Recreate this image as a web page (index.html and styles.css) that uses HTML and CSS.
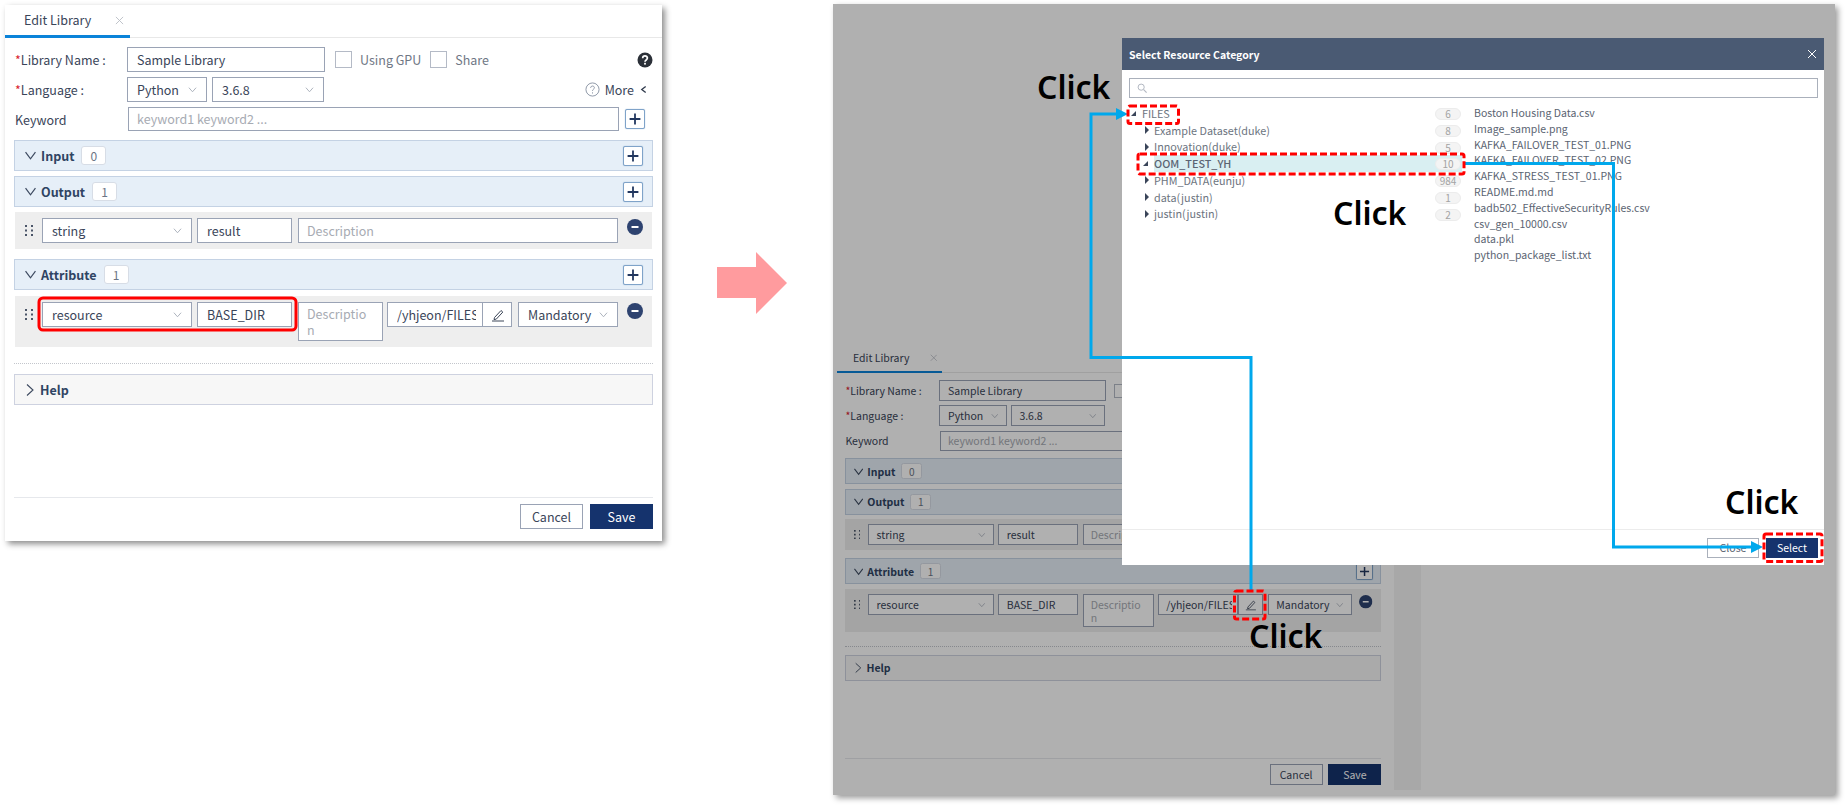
FILE: index.html
```html
<!DOCTYPE html>
<html lang="en">
<head>
<meta charset="utf-8">
<title>Edit Library</title>
<link rel="stylesheet" href="styles.css">
</head>
<body>
<svg class="sprite" width="0" height="0" aria-hidden="true">
  <symbol id="chev" viewBox="0 0 10 10"><path d="M1 3l4 4.5L9 3" fill="none" stroke="currentColor" stroke-width="1"/></symbol>
  <symbol id="bar-down" viewBox="0 0 10 10"><path d="M.5 2l4.5 6 4.5-6" fill="none" stroke="currentColor" stroke-width="1.1"/></symbol>
  <symbol id="bar-right" viewBox="0 0 10 12"><path d="M2 .5L8 6l-6 5.500" fill="none" stroke="currentColor" stroke-width="1.1"/></symbol>
  <symbol id="back" viewBox="0 0 8 10"><path d="M6.500 1.500L2 5l4.500 3.500" fill="none" stroke="#2f3a4c" stroke-width="1.500"/></symbol>
  <symbol id="plus" viewBox="0 0 20 20"><path d="M10 4v12M4 10h12" stroke="#22375f" stroke-width="2"/></symbol>
  <symbol id="minus" viewBox="0 0 16 16"><circle cx="8" cy="8" r="8" fill="#2e4370"/><path d="M4.500 8h7" stroke="#fff" stroke-width="2"/></symbol>
  <symbol id="dots" viewBox="0 0 8 11"><g fill="#4a5568"><rect x="0" y="0" width="2" height="2"/><rect x="6" y="0" width="2" height="2"/><rect x="0" y="4.500" width="2" height="2"/><rect x="6" y="4.500" width="2" height="2"/><rect x="0" y="9" width="2" height="2"/><rect x="6" y="9" width="2" height="2"/></g></symbol>
  <symbol id="pencil" viewBox="0 0 14 14"><path d="M3.500 9.500L10 2.500l1.800 1.600-6.500 7-2.300.5zM1 13h12" fill="none" stroke="#3c4658" stroke-width="1"/></symbol>
  <symbol id="close" viewBox="0 0 10 10"><path d="M1 1l8 8M9 1l-8 8" fill="none" stroke="currentColor" stroke-width="1"/></symbol>
  <symbol id="help-solid" viewBox="0 0 16 16"><circle cx="8" cy="8" r="7.500" fill="#2b3038"/><path d="M5.700 6.200c0-3 4.700-3 4.700-.1 0 1.900-2.400 1.800-2.400 3.700" fill="none" stroke="#fff" stroke-width="1.700"/><rect x="7.100" y="10.800" width="1.800" height="1.800" fill="#fff"/></symbol>
  <symbol id="help-line" viewBox="0 0 16 16"><circle cx="8" cy="8" r="7" fill="none" stroke="#8a93a3"/><path d="M6 6.200c0-2.500 4-2.500 4-.1 0 1.700-2 1.600-2 3.300M8 11v1.300" fill="none" stroke="#8a93a3"/></symbol>
  <symbol id="search" viewBox="0 0 12 12"><circle cx="5" cy="5" r="3.700" fill="none" stroke="#b3b8c2" stroke-width="1.200"/><path d="M8 8l3.500 3.500" stroke="#b3b8c2" stroke-width="1.400"/></symbol>
</svg>

<main class="page">
  <section class="panel">
    <div class="tabs"><div class="tab"><span>Edit Library</span><svg class="tab-x"><use href="#close"/></svg></div></div>
    <div class="form">
      <div class="row row-first">
        <label class="label"><i>*</i>Library Name :</label>
        <div class="field w-name">Sample Library</div>
        <span class="check check-gpu"></span><span class="check-label">Using GPU</span>
        <span class="check check-share"></span><span class="check-label">Share</span>
        <svg class="help"><use href="#help-solid"/></svg>
      </div>
      <div class="row">
        <label class="label"><i>*</i>Language :</label>
        <div class="field select w-python">Python<svg class="chev"><use href="#chev"/></svg></div>
        <div class="field select w-version">3.6.8<svg class="chev"><use href="#chev"/></svg></div>
        <div class="more"><svg class="more-icon"><use href="#help-line"/></svg><span>More</span><svg class="more-back"><use href="#back"/></svg></div>
      </div>
      <div class="row row-keyword">
        <label class="label">Keyword</label>
        <div class="field ph w-keyword">keyword1 keyword2 ...</div>
        <button class="plus plus-keyword"><svg><use href="#plus"/></svg></button>
      </div>
      <div class="bar bar-first"><svg class="bar-chev"><use href="#bar-down"/></svg><strong>Input</strong><span class="count">0</span><button class="plus"><svg><use href="#plus"/></svg></button></div>
      <div class="bar"><svg class="bar-chev"><use href="#bar-down"/></svg><strong>Output</strong><span class="count">1</span><button class="plus"><svg><use href="#plus"/></svg></button></div>
      <div class="item item-output">
        <svg class="dots"><use href="#dots"/></svg>
        <div class="field select w-type">string<svg class="chev"><use href="#chev"/></svg></div>
        <div class="field w-key">result</div>
        <div class="field ph w-desc-full">Description</div>
        <svg class="minus"><use href="#minus"/></svg>
      </div>
      <div class="bar bar-attr"><svg class="bar-chev"><use href="#bar-down"/></svg><strong>Attribute</strong><span class="count">1</span><button class="plus"><svg><use href="#plus"/></svg></button></div>
      <div class="item item-attr">
        <svg class="dots"><use href="#dots"/></svg>
        <div class="field select w-type">resource<svg class="chev"><use href="#chev"/></svg></div>
        <div class="field w-key">BASE_DIR</div>
        <div class="field ph w-desc-wrap">Description</div>
        <div class="path-group"><div class="field w-path"><span>/yhjeon/FILES</span></div><button class="pen"><svg><use href="#pencil"/></svg></button></div>
        <div class="field select w-mand">Mandatory<svg class="chev"><use href="#chev"/></svg></div>
        <svg class="minus"><use href="#minus"/></svg>
      </div>
      <div class="dotted"></div>
      <div class="bar bar-help"><svg class="bar-chev-r"><use href="#bar-right"/></svg><strong>Help</strong></div>
    </div>
    <div class="foot"><button class="btn">Cancel</button><button class="btn btn-primary">Save</button></div>
  </section>

  <svg class="big-arrow" viewBox="0 0 70 62"><path d="M0 15h39V0l31 31-31 31V46H0z" fill="#ff9b9e"/></svg>

  <section class="shot">
    <section class="panel panel-small">
      <div class="tabs"><div class="tab"><span>Edit Library</span><svg class="tab-x"><use href="#close"/></svg></div></div>
      <div class="form">
        <div class="row row-first">
          <label class="label"><i>*</i>Library Name :</label>
          <div class="field w-name">Sample Library</div>
          <span class="check check-gpu"></span><span class="check-label">Using GPU</span>
          <span class="check check-share"></span><span class="check-label">Share</span>
          <svg class="help"><use href="#help-solid"/></svg>
        </div>
        <div class="row">
          <label class="label"><i>*</i>Language :</label>
          <div class="field select w-python">Python<svg class="chev"><use href="#chev"/></svg></div>
          <div class="field select w-version">3.6.8<svg class="chev"><use href="#chev"/></svg></div>
          <div class="more"><svg class="more-icon"><use href="#help-line"/></svg><span>More</span><svg class="more-back"><use href="#back"/></svg></div>
        </div>
        <div class="row row-keyword">
          <label class="label">Keyword</label>
          <div class="field ph w-keyword">keyword1 keyword2 ...</div>
          <button class="plus plus-keyword"><svg><use href="#plus"/></svg></button>
        </div>
        <div class="bar bar-first"><svg class="bar-chev"><use href="#bar-down"/></svg><strong>Input</strong><span class="count">0</span><button class="plus"><svg><use href="#plus"/></svg></button></div>
        <div class="bar"><svg class="bar-chev"><use href="#bar-down"/></svg><strong>Output</strong><span class="count">1</span><button class="plus"><svg><use href="#plus"/></svg></button></div>
        <div class="item item-output">
          <svg class="dots"><use href="#dots"/></svg>
          <div class="field select w-type">string<svg class="chev"><use href="#chev"/></svg></div>
          <div class="field w-key">result</div>
          <div class="field ph w-desc-full">Description</div>
          <svg class="minus"><use href="#minus"/></svg>
        </div>
        <div class="bar bar-attr"><svg class="bar-chev"><use href="#bar-down"/></svg><strong>Attribute</strong><span class="count">1</span><button class="plus"><svg><use href="#plus"/></svg></button></div>
        <div class="item item-attr">
          <svg class="dots"><use href="#dots"/></svg>
          <div class="field select w-type">resource<svg class="chev"><use href="#chev"/></svg></div>
          <div class="field w-key">BASE_DIR</div>
          <div class="field ph w-desc-wrap">Description</div>
          <div class="path-group"><div class="field w-path"><span>/yhjeon/FILES</span></div><button class="pen"><svg><use href="#pencil"/></svg></button></div>
          <div class="field select w-mand">Mandatory<svg class="chev"><use href="#chev"/></svg></div>
          <svg class="minus"><use href="#minus"/></svg>
        </div>
        <div class="dotted"></div>
        <div class="bar bar-help"><svg class="bar-chev-r"><use href="#bar-right"/></svg><strong>Help</strong></div>
      </div>
      <div class="foot"><button class="btn">Cancel</button><button class="btn btn-primary">Save</button></div>
    </section>
    <div class="side-strip"></div>
    <div class="dim"></div>

    <div class="modal">
      <header class="modal-head"><span>Select Resource Category</span><svg class="modal-x"><use href="#close"/></svg></header>
      <div class="modal-search"><svg class="search-icon"><use href="#search"/></svg></div>
      <div class="modal-body">
        <ul class="tree">
          <li class="node node-root"><span class="tri-open"></span><span class="node-name">FILES</span><em>6</em></li>
          <li class="node"><span class="tri"></span><span class="node-name">Example Dataset(duke)</span><em>8</em></li>
          <li class="node"><span class="tri"></span><span class="node-name">Innovation(duke)</span><em>5</em></li>
          <li class="node node-active"><span class="tri-open"></span><span class="node-name">OOM_TEST_YH</span><em>10</em></li>
          <li class="node"><span class="tri"></span><span class="node-name">PHM_DATA(eunju)</span><em>984</em></li>
          <li class="node"><span class="tri"></span><span class="node-name">data(justin)</span><em>1</em></li>
          <li class="node"><span class="tri"></span><span class="node-name">justin(justin)</span><em>2</em></li>
        </ul>
        <ul class="files">
          <li>Boston Housing Data.csv</li>
          <li>Image_sample.png</li>
          <li>KAFKA_FAILOVER_TEST_01.PNG</li>
          <li>KAFKA_FAILOVER_TEST_02.PNG</li>
          <li>KAFKA_STRESS_TEST_01.PNG</li>
          <li>README.md.md</li>
          <li>badb502_EffectiveSecurityRules.csv</li>
          <li>csv_gen_10000.csv</li>
          <li>data.pkl</li>
          <li>python_package_list.txt</li>
        </ul>
      </div>
      <footer class="modal-foot"><button class="mbtn">Close</button><button class="mbtn mbtn-primary">Select</button></footer>
    </div>
  </section>

  <svg class="notes" viewBox="0 0 1848 808" aria-hidden="true">
    <rect x="39" y="298" width="257" height="32" rx="4" fill="none" stroke="#f00" stroke-width="3"/>
    <g fill="none" stroke="#00a8ec" stroke-width="3">
      <path d="M1251 590V357.500H1091V114H1118"/>
      <path d="M1463 163.500H1613.500V547H1753"/>
    </g>
    <g fill="#00a8ec">
      <path d="M1116 108l12 6-12 6z"/>
      <path d="M1751 541l12 6-12 6z"/>
    </g>
    <g fill="none" stroke="#f00" stroke-width="3" stroke-dasharray="7 3">
      <rect x="1128" y="106" width="50.500" height="17.500" rx="2"/>
      <rect x="1138" y="154" width="326" height="20" rx="2"/>
      <rect x="1234.500" y="591" width="30.500" height="28" rx="2"/>
      <rect x="1764" y="534" width="58" height="27.500" rx="2"/>
    </g>
  </svg>
  <span class="click click-a">Click</span>
  <span class="click click-b">Click</span>
  <span class="click click-c">Click</span>
  <span class="click click-d">Click</span>
</main>
</body>
</html>
```
FILE: styles.css
```css
* { box-sizing: border-box; }
html, body { margin: 0; padding: 0; background: #fff; }
body {
  width: 1848px;
  height: 808px;
  overflow: hidden;
  font-family: "Noto Sans CJK KR", "Noto Sans", sans-serif;
  font-size: 12.500px;
  color: #3a4559;
}
ul { list-style: none; margin: 0; padding: 0; }
button { font: inherit; padding: 0; cursor: pointer; background: none; }
.sprite { position: absolute; }

.page {
  position: relative;
  width: 1848px;
  height: 808px;
  display: flex;
  align-items: flex-start;
  padding: 5px 0 0 5px;
}

/* Edit Library panel */
.panel {
  flex: none;
  width: 657px;
  height: 536px;
  display: flex;
  flex-direction: column;
  background: #fff;
  box-shadow: 3px 3px 6px rgba(0, 0, 0, .45);
}
.tabs { flex: none; height: 33px; border-bottom: 1px solid #e8e8e8; }
.tab {
  width: 125px;
  height: 33px;
  padding-left: 19px;
  display: flex;
  align-items: center;
  gap: 24px;
  border-bottom: 3px solid #0b83d9;
  color: #3a4559;
  line-height: 18px;
}
.tab-x { width: 9px; height: 9px; color: #b9bdc5; }

.form { flex: 1; padding: 9px 9px 0; display: flex; flex-direction: column; }
.row { display: flex; align-items: center; height: 25px; margin-top: 5px; }
.row-first { margin-top: 0; }
.row-keyword { height: 24px; }
.label { flex: none; width: 113px; padding-left: 1px; color: #3a4559; }
.label i { font-style: normal; color: #d9232e; }

.field {
  flex: none;
  height: 25px;
  padding: 0 9px;
  display: flex;
  align-items: center;
  position: relative;
  border: 1px solid #9aa3b5;
  background: #fff;
  color: #3a4559;
  line-height: 16px;
  white-space: nowrap;
}
.ph { color: #a7abb3; padding-left: 8px; }
.select .chev { position: absolute; right: 9px; top: 7px; width: 9px; height: 9px; color: #a5abb7; }
.w-name { width: 198px; }
.w-python { width: 80px; }
.w-version { width: 112px; margin-left: 5px; }
.w-keyword { width: 491px; height: 24px; margin-left: 1px; }
.w-type { width: 150px; }
.w-key { width: 95px; margin-left: 5px; }
.w-desc-full { width: 320px; margin-left: 6px; }
.w-desc-wrap {
  width: 85px;
  height: 39px;
  margin-left: 6px;
  padding: 3px 9px 3px 8px;
  display: block;
  white-space: normal;
  word-break: break-all;
  line-height: 16px;
  overflow: hidden;
}
.w-path { width: 96px; padding-right: 6px; overflow: hidden; }
.w-path span { display: block; overflow: hidden; width: 81px; }
.w-mand { width: 100px; margin-left: 6px; }
.path-group { flex: none; display: flex; margin-left: 4px; }

.check { flex: none; width: 17px; height: 17px; border: 1px solid #b4bac6; background: #fff; }
.check-gpu { margin-left: 10px; }
.check-share { margin-left: 9px; }
.check-label { margin-left: 8px; color: #6f7785; }
.help { margin-left: auto; width: 16px; height: 16px; }

.more { margin-left: auto; display: flex; align-items: center; margin-right: 6px; color: #3a4559; }
.more-icon { width: 15px; height: 15px; margin-right: 5px; }
.more-back { margin-left: 6px; width: 7px; height: 9px; }

.plus {
  flex: none;
  margin-left: auto;
  width: 20px;
  height: 20px;
  display: block;
  border: 1px solid #7fa3c9;
  border-radius: 2px;
  background: #fff;
  box-shadow: 0 0 1px #7fa3c9;
  overflow: hidden;
}
.plus svg { display: block; width: 18px; height: 18px; }
.plus-keyword { margin-left: 6px; }

.bar {
  flex: none;
  height: 31px;
  margin-top: 5px;
  padding: 0 9px 0 10px;
  display: flex;
  align-items: center;
  background: #e6eff8;
  border: 1px solid #c4d2e4;
}
.bar-first { margin-top: 9px; }
.bar-attr { margin-top: 10px; }
.bar strong { margin-left: 5px; color: #2f4463; font-weight: 700; line-height: 18px; }
.bar-chev { width: 11px; height: 11px; color: #3d4a60; }
.bar-chev-r { width: 10px; height: 14px; color: #3d4a60; }
.count {
  margin-left: 7px;
  width: 25px;
  height: 19px;
  display: flex;
  align-items: center;
  justify-content: center;
  border: 1px solid #d7dde6;
  border-radius: 3px;
  background: #fff;
  color: #6b7585;
  font-size: 12px;
}
.bar-help { margin-top: 10px; background: #f7f7f7; border-color: #ced2e0; }

.item {
  flex: none;
  margin: 5px 1px 0;
  padding: 6px 0 0 10px;
  display: flex;
  align-items: flex-start;
  background: #eee;
}
.item-output { height: 37px; }
.item-attr { height: 51px; margin-top: 6px; }
.dots { flex: none; width: 8px; height: 11px; margin: 7px 9px 0 0; }
.minus { flex: none; width: 16px; height: 16px; margin: 1px 0 0 9px; }
.pen {
  flex: none;
  width: 30px;
  height: 25px;
  margin-left: -1px;
  border: 1px solid #9aa3b5;
  background: #fff;
  display: flex;
  align-items: center;
  justify-content: center;
}
.pen svg { width: 14px; height: 14px; margin-left: 1px; }

.dotted { flex: none; margin-top: 16px; height: 1px; border-top: 1px dotted #c3c6cc; }

.foot {
  flex: none;
  margin: 0 9px;
  padding: 6px 0 12px;
  border-top: 1px solid #e6e8ec;
  display: flex;
  justify-content: flex-end;
  gap: 7px;
}
.btn {
  width: 63px;
  height: 25px;
  border: 1px solid #9aa3b5;
  background: #fff;
  color: #3a4559;
  line-height: 16px;
}
.btn-primary { background: #15336d; border-color: #15336d; color: #fff; }

/* pink arrow */
.big-arrow { flex: none; width: 70px; height: 62px; margin: 247px 46px 0 55px; }

/* second screenshot */
.shot {
  flex: none;
  position: relative;
  width: 1002px;
  height: 791px;
  margin-top: -1px;
  padding: 341px 0 0 4px;
  display: flex;
  align-items: flex-start;
  background: #fff;
  box-shadow: 3px 3px 6px rgba(0, 0, 0, .4);
}
.panel-small { zoom: .84; box-shadow: none; }
.side-strip { flex: none; width: 27px; height: 445px; margin-left: 5px; background: #f3f3f3; }
.dim { position: absolute; inset: 0; background: rgba(0, 0, 0, .31); }

.modal {
  position: absolute;
  left: 289px;
  top: 34px;
  width: 702px;
  height: 527px;
  display: flex;
  flex-direction: column;
  background: #fff;
  font-size: 10.500px;
  color: #5b6472;
}
.modal-head {
  flex: none;
  height: 32px;
  padding: 0 7px;
  display: flex;
  align-items: center;
  justify-content: space-between;
  background: #4a5a73;
  color: #fff;
  font-weight: 700;
}
.modal-x { width: 10px; height: 10px; color: #fff; }
.modal-search {
  flex: none;
  height: 20px;
  margin: 8px 6px 0 7px;
  padding-left: 7px;
  display: flex;
  align-items: center;
  border: 1px solid #aab0bb;
}
.search-icon { width: 10px; height: 10px; }
.modal-body { flex: 1; display: flex; align-items: flex-start; padding: 7px 0 0 7px; }
.tree { flex: none; width: 333px; font-size: 10.800px; }
.node {
  position: relative;
  height: 16.750px;
  padding-left: 10px;
  display: flex;
  align-items: center;
  line-height: 16px;
  color: #6c7480;
}
.node-root { padding-left: 0; }
.node-root .tri-open { margin: 0 6px 0 2px; }
.node-name { flex: 1; height: 17px; line-height: 17px; }
.tri {
  flex: none;
  width: 0;
  height: 0;
  margin: 0 5px 0 6px;
  border-left: 4px solid #3a4559;
  border-top: 4px solid transparent;
  border-bottom: 4px solid transparent;
}
.tri-open {
  flex: none;
  width: 0;
  height: 0;
  margin: 0 6px 0 4px;
  border-bottom: 5px solid #3a4559;
  border-left: 5px solid transparent;
}
.node-active .node-name { background: #d9eff2; font-weight: 500; color: #5b6472; }
.node em {
  position: absolute;
  right: 1px;
  top: 3px;
  width: 26px;
  height: 12px;
  border: 1px solid #ececec;
  border-radius: 6px;
  background: #f4f4f4;
  font-style: normal;
  font-size: 10px;
  line-height: 10px;
  text-align: center;
  color: #a3a3a3;
}
.files { margin-left: 12px; }
.files li { height: 15.800px; line-height: 16px; white-space: nowrap; color: #5b6472; }
.modal-foot {
  flex: none;
  height: 36px;
  padding: 8px 6px 0 0;
  display: flex;
  justify-content: flex-end;
  align-items: flex-start;
  gap: 7px;
  border-top: 1px solid #ececec;
}
.mbtn { width: 52px; height: 20px; border: 1px solid #aab0bb; background: #fff; color: #5b6472; font-size: 10.500px; line-height: 14px; }
.mbtn-primary { background: #15336d; border-color: #15336d; color: #fff; }

/* annotations */
.notes { position: absolute; left: 0; top: 0; width: 1848px; height: 808px; pointer-events: none; }
.click {
  position: absolute;
  font-family: "Noto Sans", sans-serif;
  font-weight: 600;
  font-size: 32px;
  line-height: 36px;
  color: #000;
}
.click-a { left: 1037px; top: 69px; }
.click-b { left: 1333px; top: 195px; }
.click-c { left: 1725px; top: 484px; }
.click-d { left: 1249px; top: 618px; }
```
